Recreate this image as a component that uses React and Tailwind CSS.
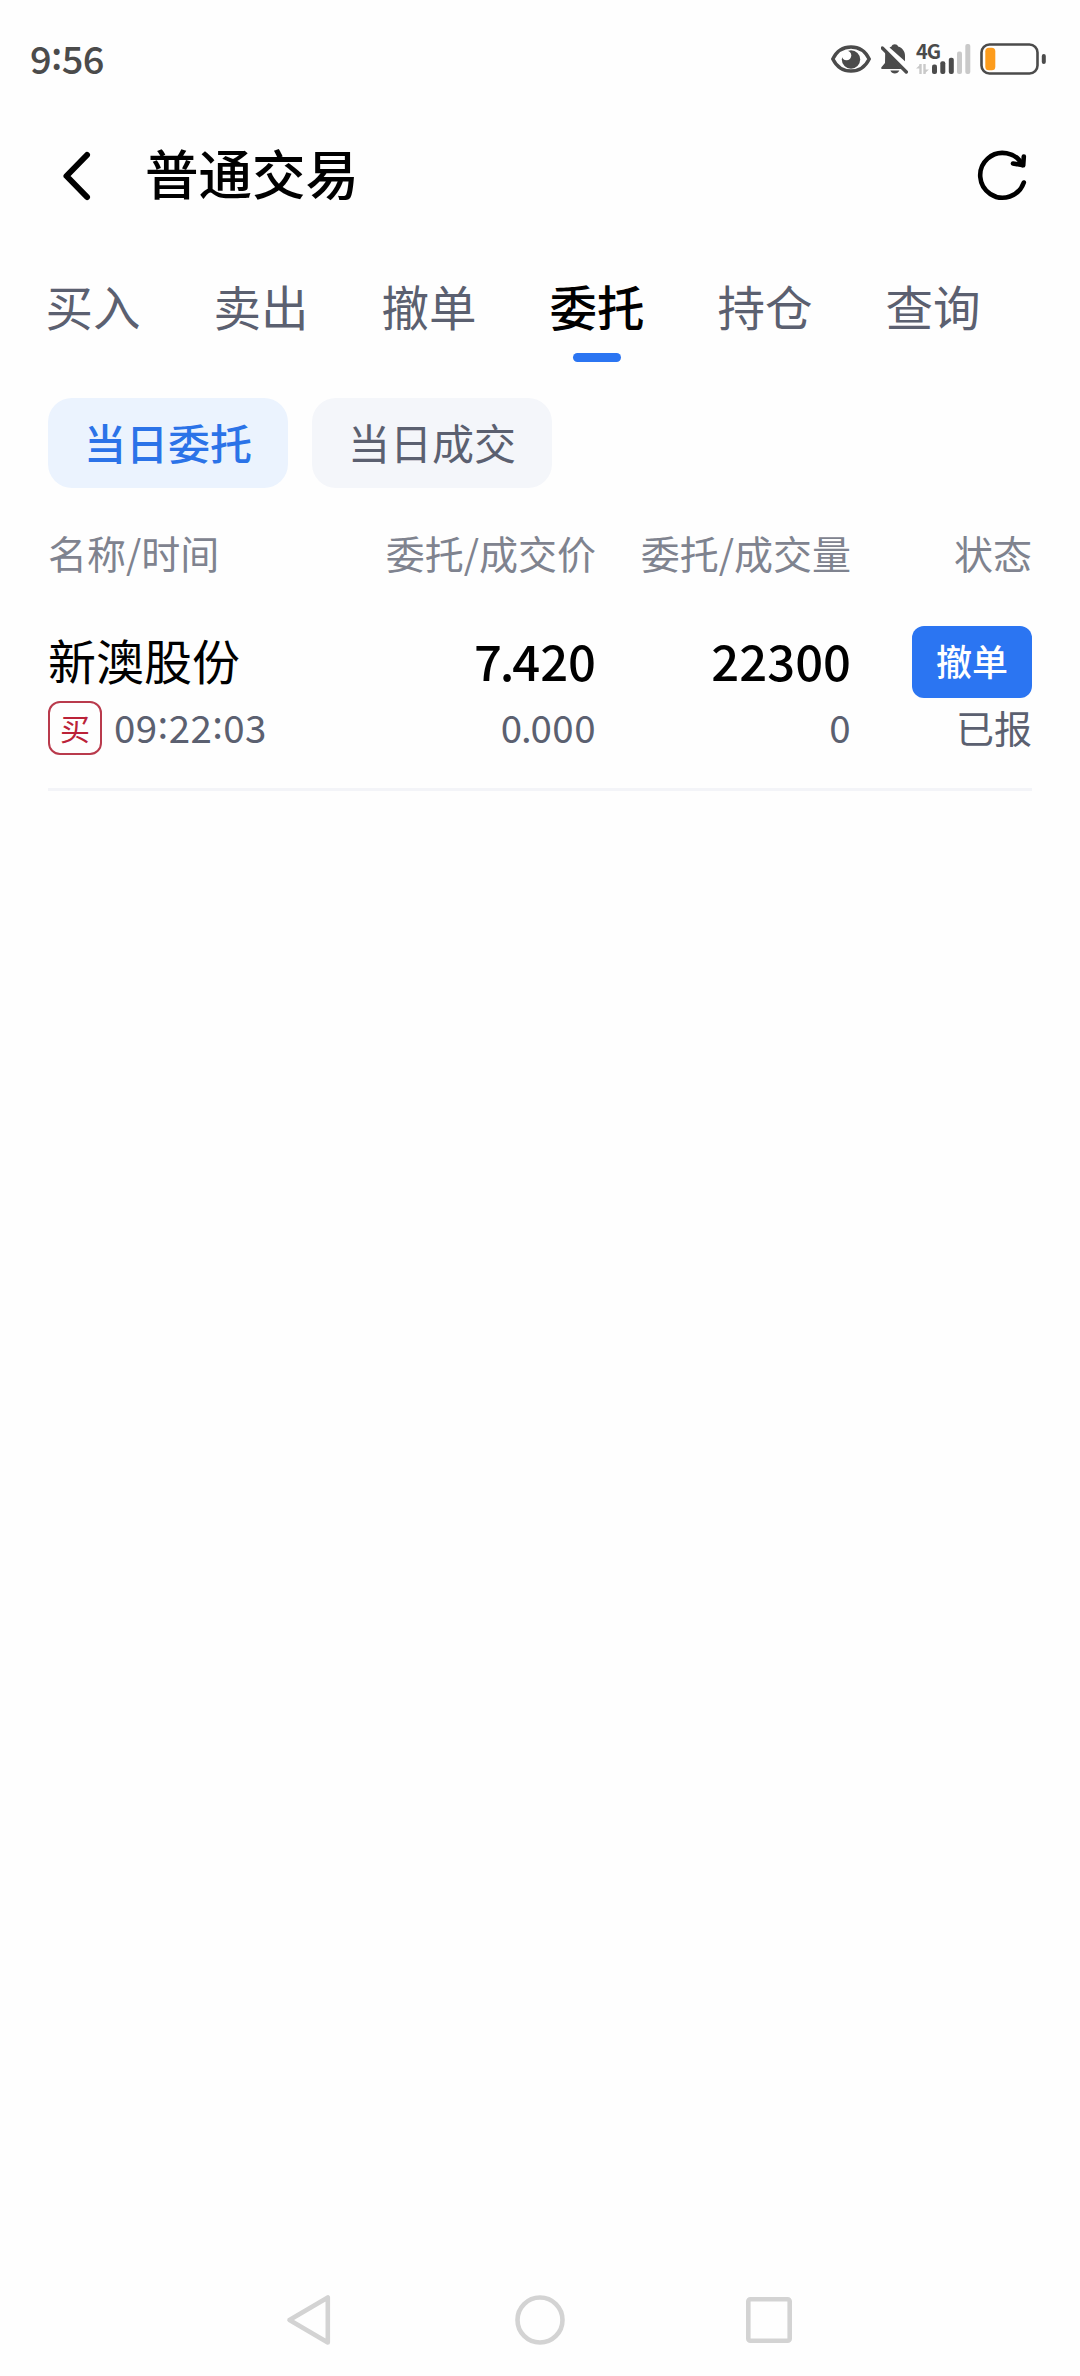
const tabs = ['买入', '卖出', '撤单', '委托', '持仓', '查询']

const orders = [
  { name: '新澳股份', side: '买', time: '09:22:03', price: '7.420', dealPrice: '0.000', amount: '22300', dealAmount: '0', status: '已报' },
]

export default function App() {
  return (
    <div className="flex flex-col w-[1080px] h-[2376px] bg-[#fefefe] text-black font-['Noto_Sans_CJK_SC',sans-serif] overflow-hidden">
      <StatusBar />
      <Header />
      <Tabs active="委托" />
      <div className="flex gap-6 px-12 mt-8">
        <div className="w-60 h-[90px] rounded-3xl bg-[#ebf3fe] text-[#2b73e8] text-[42px] leading-[87px] font-medium text-center">当日委托</div>
        <div className="w-60 h-[90px] rounded-3xl bg-[#f4f6fa] text-[#5b6070] text-[42px] leading-[87px] text-center">当日成交</div>
      </div>
      <OrderTable />
      <NavBar />
    </div>
  )
}

function StatusBar() {
  return (
    <div className="flex items-center justify-between h-[118px] pl-[30px] pr-[33px]">
      <Time value="9:56" className="text-[38px] font-medium tracking-[-0.6px] text-[#4b4b4b] top-[-1px]" />
      <div className="flex items-center">
        <svg className="w-[40px] h-[32px]" viewBox="0 0 40 32" fill="none">
          <path d="M1.8 16C5.5 8.5 12 4 20 4s14.500 4.500 18.200 12C34.500 23.500 28 28 20 28S5.500 23.500 1.800 16Z" stroke="#4b4b4b" strokeWidth="3.400" />
          <circle cx="20" cy="16.500" r="9.200" fill="#4b4b4b" />
          <circle cx="15.500" cy="12.500" r="4.800" fill="#fefefe" />
        </svg>
        <svg className="w-[28px] h-[32px] ml-[10px]" viewBox="0 0 28 32" fill="#4b4b4b">
          <path d="M10.500 3.500C11 2 12.300 1.200 13.800 1.200s2.800.8 3.300 2.300c4.200 1.300 6.900 4.800 6.900 9.200v5.500L8.500 4.600Z" />
          <path d="M4.200 9.200 20.500 26H1.200c-1 0-1.300-1.200-.6-1.900L4 20Z" />
          <path d="M9.300 27.600h9c-.8 2-2.500 3-4.500 3s-3.700-1-4.500-3Z" />
          <path d="M1.300 5 25.300 29" stroke="#4b4b4b" strokeWidth="3.400" strokeLinecap="round" />
        </svg>
        <div className="flex flex-col w-[22px] h-[32px] ml-[7px]">
          <span className="font-bold text-[20px] leading-[19px] tracking-[-1px] text-[#4b4b4b] relative top-[-2px]">4G</span>
          <svg className="w-[13px] h-[10px] mt-[2px]" viewBox="0 0 13 10" fill="#c9c9c9">
            <path d="M4.500 0v10M8.500 0v10" stroke="#c9c9c9" strokeWidth="2.400" />
            <path d="M0 4.600 5 0v4.600ZM13 5.400 8 10V5.400Z" />
          </svg>
        </div>
        <svg className="w-[40px] h-[32px] ml-[-7px]" viewBox="0 0 40 32">
          <rect x="1" y="21.500" width="5" height="9.500" rx="2" fill="#4b4b4b" />
          <rect x="9.300" y="18.200" width="5" height="12.800" rx="2" fill="#4b4b4b" />
          <rect x="17.800" y="14.800" width="5" height="16.200" rx="2" fill="#4b4b4b" />
          <rect x="26" y="8.500" width="5" height="22.500" rx="2" fill="#c9c9c9" />
          <rect x="34.300" y="1" width="5" height="30" rx="2" fill="#c9c9c9" />
        </svg>
        <svg className="w-[67px] h-[34px] ml-[9px]" viewBox="0 0 67 34">
          <rect x="1.500" y="2.500" width="56" height="29" rx="8" fill="none" stroke="#4b4b4b" strokeWidth="2.600" />
          <rect x="5.300" y="5.800" width="10" height="22.500" rx="3.500" fill="#fd9c1c" />
          <rect x="61.800" y="12" width="4" height="10" rx="2" fill="#4b4b4b" />
        </svg>
      </div>
    </div>
  )
}

function Header() {
  return (
    <div className="flex items-center h-[116px] pl-[60px] pr-[50px]">
      <svg className="w-[33px] h-[54px]" viewBox="0 0 33 54" fill="none" stroke="#000" strokeWidth="6" strokeLinecap="round" strokeLinejoin="round">
        <path d="M27 6 6.500 27 27 48" />
      </svg>
      <h1 className="ml-[52px] text-[53.5px] leading-[80px] font-medium relative top-[-4px]">普通交易</h1>
      <svg className="w-[54px] h-[54px] ml-auto" viewBox="0 0 54 54" fill="none" stroke="#000" strokeWidth="4.600" strokeLinecap="round" strokeLinejoin="round">
        <path d="M47.800 33.500A22.400 22.400 0 1 1 46.500 16" />
        <path d="M37 14.500 47.200 16.300 47.800 7.500" />
      </svg>
    </div>
  )
}

function Tabs({ active }) {
  return (
    <div className="flex h-[132px] pl-[9px] pt-[36px]">
      {tabs.map((tab) => (
        <div key={tab} className="flex flex-col items-center w-[168px]">
          <span className={`text-[47.5px] leading-[72px] ${tab === active ? 'font-medium text-black' : 'text-[#5b6070]'}`}>{tab}</span>
          {tab === active && <span className="w-12 h-[9px] mt-[11px] rounded-full bg-[#2b75f2]" />}
        </div>
      ))}
    </div>
  )
}

function OrderTable() {
  return (
    <div className="px-12 mt-[35px]">
      <div className="grid grid-cols-[300px_248px_255px_181px] text-[39px] leading-[58px] text-[#7f838f] text-right">
        <div className="text-left">名称/时间</div>
        <div>委托/成交价</div>
        <div>委托/成交量</div>
        <div>状态</div>
      </div>
      {orders.map((o) => (
        <div key={o.time} className="mt-[45px] h-[165px] border-b-[3px] border-[#f3f4f8]">
          <div className="grid grid-cols-[300px_248px_255px_181px] items-center h-[72px] text-right">
            <div className="text-left text-[48px] leading-[72px] relative top-[-3px]">{o.name}</div>
            <Num value={o.price} className="text-[49px] font-medium top-[-3px]" />
            <Num value={o.amount} className="text-[49px] font-medium top-[-3px]" />
            <button className="justify-self-end w-[120px] h-[72px] rounded-xl bg-[#2b75f2] text-white text-[36px] leading-[66px] pb-[4px] font-medium">撤单</button>
          </div>
          <div className="grid grid-cols-[300px_248px_255px_181px] items-center h-[60px] text-right text-[#5b6070]">
            <div className="flex items-center gap-3">
              <span className="w-[54px] h-[54px] rounded-xl border-2 border-[#b93a4c] text-[#bb2238] text-[30px] leading-[48px] text-center">{o.side}</span>
              <Time value={o.time} className="text-[38.5px] tracking-[0.4px] top-[-2px]" />
            </div>
            <Num value={o.dealPrice} className="text-[38.5px] tracking-[0.5px] top-[-2px]" />
            <Num value={o.dealAmount} className="text-[38.5px] tracking-[0.5px] top-[-2px]" />
            <div className="text-[38px] leading-[60px] relative top-[-1px]">{o.status}</div>
          </div>
        </div>
      ))}
    </div>
  )
}

// right-aligned figure with a tightened decimal point
function Num({ value, className }) {
  const [whole, decimals] = value.split('.')
  return (
    <div className={`relative leading-none ${className}`}>
      {whole}
      {decimals && <span className="-mx-[0.045em]">.</span>}
      {decimals}
    </div>
  )
}

// colons sit at mid height between the digits
function Time({ value, className }) {
  return (
    <div className={`relative leading-none ${className}`}>
      {value.split(':').map((part, i) => (
        <span key={i}>
          {i > 0 && <span className="relative top-[-4px]">:</span>}
          {part}
        </span>
      ))}
    </div>
  )
}

function NavBar() {
  return (
    <div className="flex items-center justify-between mt-auto h-[112px] px-[284px]">
      <svg className="w-[50px] h-[54px]" viewBox="0 0 50 54" fill="none" stroke="#d3d3d3" strokeWidth="4.600" strokeLinejoin="round">
        <path d="M43.800 4.500v45L5.500 27Z" />
      </svg>
      <svg className="w-[54px] h-[54px]" viewBox="0 0 54 54" fill="none" stroke="#d3d3d3" strokeWidth="4.600">
        <circle cx="27" cy="27" r="22.500" />
      </svg>
      <svg className="w-[50px] h-[54px]" viewBox="0 0 50 54" fill="none" stroke="#d3d3d3" strokeWidth="4.600">
        <rect x="2.300" y="6.300" width="41.400" height="41.400" rx="2" />
      </svg>
    </div>
  )
}
